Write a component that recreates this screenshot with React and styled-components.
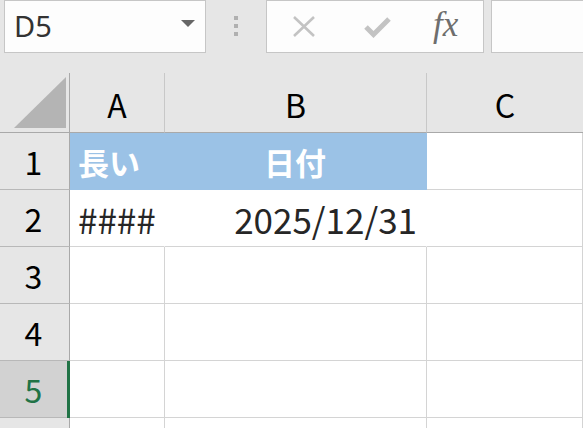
import React from 'react';
import styled, { createGlobalStyle } from 'styled-components';

const GlobalStyle = createGlobalStyle`
    html, body {
        margin: 0;
        padding: 0;
        background: #e6e6e6;
        overflow: hidden;
    }
    body {
        font-family: "Noto Sans CJK JP", "Noto Sans", sans-serif;
    }
`

const columns = ['A', 'B', 'C'];

const rows = [
    {
        num: 1,
        cells: [
            { text: '長い', fill: '#9bc2e6', bold: true, color: '#fff', align: 'left' },
            { text: '日付', fill: '#9bc2e6', bold: true, color: '#fff', align: 'center' },
            {},
        ],
    },
    {
        num: 2,
        cells: [
            { text: '####', align: 'left', noRight: true },
            { text: '2025/12/31', align: 'right', noRight: true },
            {},
        ],
    },
    { num: 3, cells: [{}, {}, {}] },
    { num: 4, cells: [{}, {}, {}] },
    { num: 5, cells: [{}, {}, {}], selected: true },
    // row 6 only peeks in at the bottom edge, its label is below the fold
    { num: '', cells: [{}, {}, {}] },
];

const App = () => {
    return (
        <Page>
            <GlobalStyle />
            <TopBar>
                <NameBox>
                    <span>D5</span>
                    <Caret />
                </NameBox>
                <Grip>
                    <i /><i /><i />
                </Grip>
                <FormulaButtons>
                    <svg width="24" height="21" viewBox="0 0 24 21">
                        <path d="M2 1 L22 20 M22 1 L2 20" stroke="#c3c3c3" strokeWidth="2.6" fill="none" />
                    </svg>
                    <svg width="27" height="22" viewBox="0 0 27 22">
                        <path d="M2 11 L9.5 18.5 L25 3" stroke="#c3c3c3" strokeWidth="5" fill="none" />
                    </svg>
                    <Fx>fx</Fx>
                </FormulaButtons>
                <FormulaInput />
            </TopBar>
            <Sheet>
                <Corner>
                    <Triangle />
                </Corner>
                {columns.map(c => (
                    <ColHead key={c}>{c}</ColHead>
                ))}
                {rows.map((r, ri) => (
                    <React.Fragment key={ri}>
                        <RowHead $selected={r.selected}>{r.num}</RowHead>
                        {r.cells.map((cell, i) => (
                            <Cell
                                key={i}
                                $fill={cell.fill}
                                $align={cell.align}
                                $bold={cell.bold}
                                $color={cell.color}
                                $noRight={cell.noRight}
                            >
                                {cell.text}
                            </Cell>
                        ))}
                    </React.Fragment>
                ))}
            </Sheet>
        </Page>
    )
}

export default App

const Page = styled.div`
    width: 583px;
    height: 428px;
    overflow: hidden;
    background: #e6e6e6;
`

const TopBar = styled.div`
    display: flex;
    align-items: flex-start;
    height: 73px;
    padding-left: 4px;
    box-sizing: border-box;
`

const NameBox = styled.div`
    display: flex;
    align-items: center;
    justify-content: space-between;
    width: 202px;
    height: 53px;
    box-sizing: border-box;
    border: 1px solid #c6c6c6;
    background: #fdfdfd;
    padding: 0 10px 2px 9px;

    span {
        font-family: "Noto Sans", "Liberation Sans", sans-serif;
        font-size: 29px;
        color: #333;
        line-height: 1;
    }
`

const Caret = styled.div`
    width: 0;
    height: 0;
    border-left: 7px solid transparent;
    border-right: 7px solid transparent;
    border-top: 7px solid #666;
    margin-bottom: 4px;
`

const Grip = styled.div`
    display: flex;
    flex-direction: column;
    gap: 4px;
    margin: 16px 28px 0 28px;

    i {
        display: block;
        width: 4px;
        height: 4px;
        background: #b0b0b0;
    }
`

const FormulaButtons = styled.div`
    display: flex;
    align-items: center;
    width: 218px;
    height: 53px;
    box-sizing: border-box;
    border: 1px solid #c6c6c6;
    background: #fdfdfd;
    padding: 0 0 0 25px;

    svg:nth-child(1) {
        margin-right: 48px;
    }
    svg:nth-child(2) {
        margin-right: 42px;
    }
`

const Fx = styled.span`
    font-family: "Liberation Serif", serif;
    font-style: italic;
    font-size: 35px;
    color: #6e6e6e;
    line-height: 1;
    margin-top: -5px;
`

const FormulaInput = styled.div`
    flex: 1;
    height: 53px;
    margin-left: 7px;
    box-sizing: border-box;
    border: 1px solid #c6c6c6;
    border-right: none;
    background: #fdfdfd;
`

const Sheet = styled.div`
    display: grid;
    grid-template-columns: 70px 95px 262px 1fr;
    grid-template-rows: 60px repeat(6, 57px);
    background: #fff;
`

const Corner = styled.div`
    position: relative;
    background: #e6e6e6;
    border-right: 1px solid #a9a9a9;
    border-bottom: 1px solid #a9a9a9;
`

const Triangle = styled.div`
    position: absolute;
    left: 14px;
    top: 4px;
    width: 52px;
    height: 51px;
    background: #b4b4b4;
    clip-path: polygon(100% 0, 100% 100%, 0 100%);
`

const ColHead = styled.div`
    display: flex;
    align-items: center;
    justify-content: center;
    background: #e6e6e6;
    border-right: 1px solid #c8c8c8;
    border-bottom: 1px solid #a9a9a9;
    font-size: 32px;
    line-height: 1;
    color: #000;
    padding-top: 2px;

    &:nth-child(4) {
        border-right: none;
    }
`

const RowHead = styled.div`
    display: flex;
    align-items: center;
    justify-content: center;
    position: relative;
    background: ${p => p.$selected ? '#d2d2d2' : '#e6e6e6'};
    color: ${p => p.$selected ? '#217346' : '#000'};
    border-right: 1px solid #a9a9a9;
    border-bottom: 1px solid #b8b8b8;
    font-size: 32px;
    line-height: 1;
    padding-right: 2px;

    ${p => p.$selected && `
        &::after {
            content: '';
            position: absolute;
            right: -1px;
            top: 0;
            bottom: -1px;
            width: 3px;
            background: #217346;
        }
    `}
`

const Cell = styled.div`
    display: flex;
    align-items: center;
    justify-content: ${p => p.$align === 'right' ? 'flex-end' : p.$align === 'center' ? 'center' : 'flex-start'};
    padding: 0 9px 0 8px;
    background: ${p => p.$fill || '#fff'};
    border-right: 1px solid ${p => p.$fill || (p.$noRight ? '#fff' : '#d4d4d4')};
    border-bottom: 1px solid ${p => p.$fill || '#d4d4d4'};
    color: ${p => p.$color || '#262626'};
    font-weight: ${p => p.$bold ? 700 : 400};
    font-size: ${p => p.$bold ? '31px' : '35px'};
    line-height: 1;
    white-space: nowrap;
    overflow: hidden;
    min-width: 0;
`
